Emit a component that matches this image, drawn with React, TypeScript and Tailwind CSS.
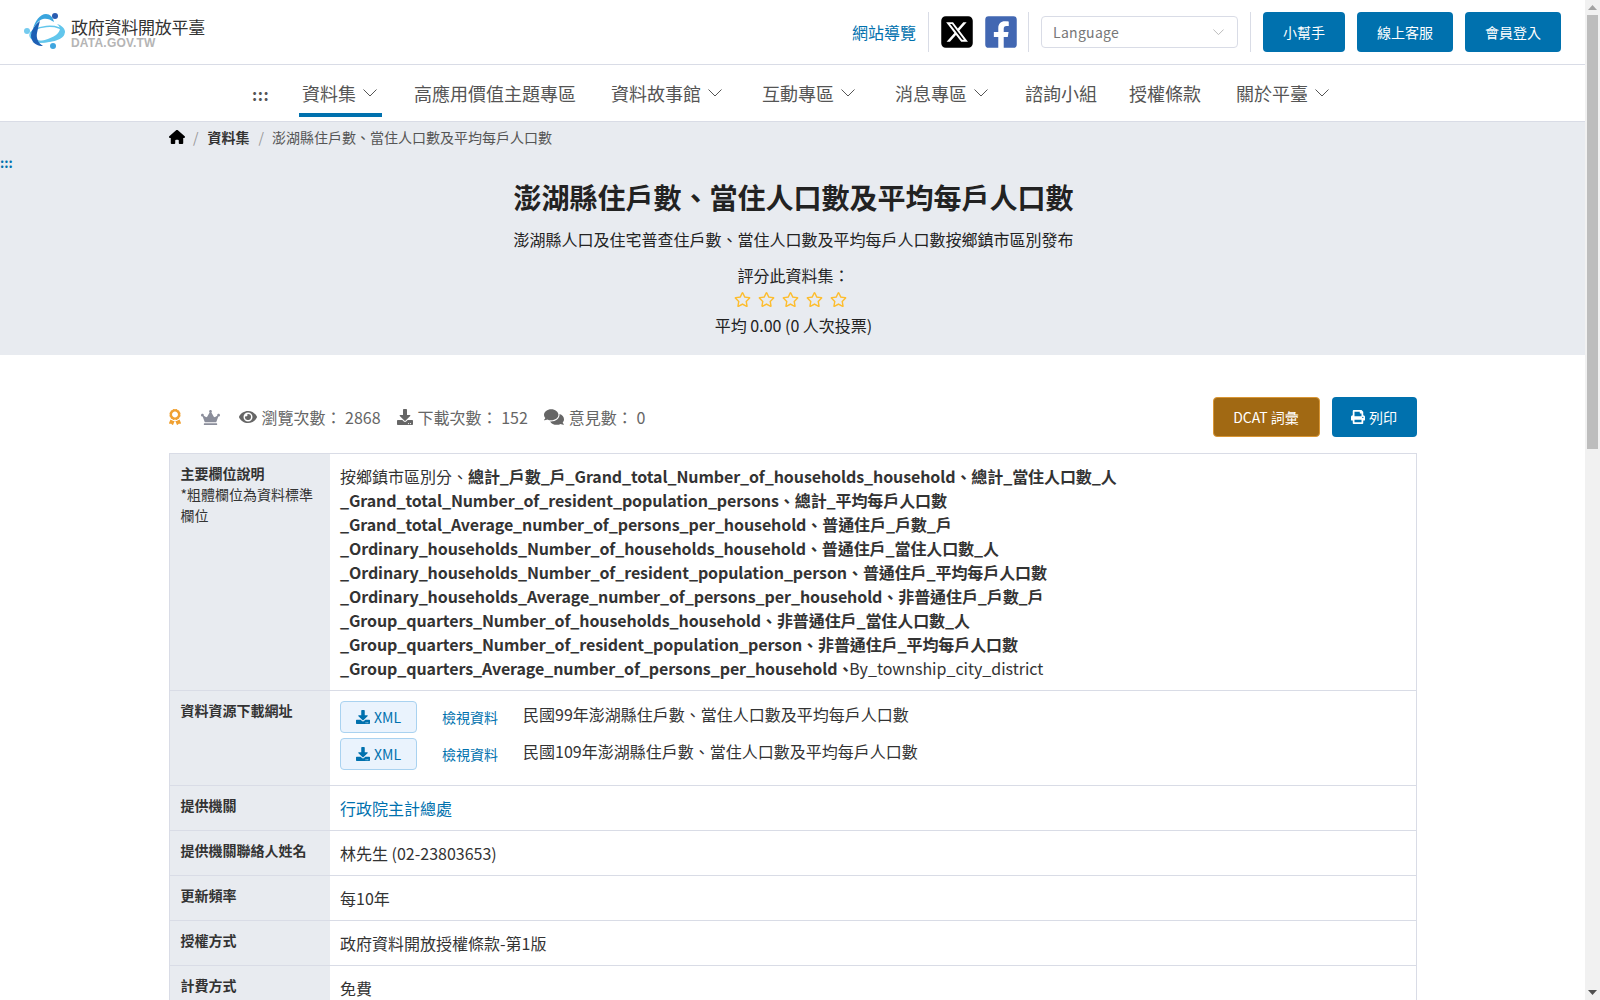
import { FaAward, FaComments, FaCrown, FaDownload, FaEye, FaFacebookSquare, FaPrint, FaRegStar } from "react-icons/fa";
import { FaHouse, FaSquareXTwitter } from "react-icons/fa6";

const navItems = [
  { label: "資料集", menu: true, active: true, gap: "" },
  { label: "高應用價值主題專區", gap: "ml-[29px]" },
  { label: "資料故事館", menu: true, gap: "ml-[29px]" },
  { label: "互動專區", menu: true, gap: "ml-[32px]" },
  { label: "消息專區", menu: true, gap: "ml-[32px]" },
  { label: "諮詢小組", gap: "ml-[29px]" },
  { label: "授權條款", gap: "ml-[26px]" },
  { label: "關於平臺", menu: true, gap: "ml-[29px]" },
];

const bold = [
  "總計_戶數_戶_Grand_total_Number_of_households_household",
  "總計_當住人口數_人_Grand_total_Number_of_resident_population_persons",
  "總計_平均每戶人口數_Grand_total_Average_number_of_persons_per_household",
  "普通住戶_戶數_戶_Ordinary_households_Number_of_households_household",
  "普通住戶_當住人口數_人_Ordinary_households_Number_of_resident_population_person",
  "普通住戶_平均每戶人口數_Ordinary_households_Average_number_of_persons_per_household",
  "非普通住戶_戶數_戶_Group_quarters_Number_of_households_household",
  "非普通住戶_當住人口數_人_Group_quarters_Number_of_resident_population_person",
  "非普通住戶_平均每戶人口數_Group_quarters_Average_number_of_persons_per_household",
];

const resources = ["民國99年澎湖縣住戶數、當住人口數及平均每戶人口數", "民國109年澎湖縣住戶數、當住人口數及平均每戶人口數"];

function Logo() {
  return (
    <svg width="42" height="40" viewBox="0 0 42 40" fill="none">
      <ellipse cx="23" cy="22" rx="17" ry="7.5" stroke="#62c6ec" strokeWidth="1.5" transform="rotate(-5 23 22)" />
      <path d="M8 30c12 3 30-2 33-10 0-4-4-7-8-8 4 3 4 7-1 11-6 4-16 7-24 7Z" fill="#62c6ec" />
      <path d="M16 9C9 14 5 22 8 28c2 4 6 6 11 6-5-3-7-8-6-13 1-5 2-9 3-12Z" fill="#1d5fb4" />
      <path d="M9 17C11 9 16 2 22 2c4 0 7 3 8 8-4-3-8-4-11-3-4 1-7 5-10 10Z" fill="#3aa5de" />
      <circle cx="31" cy="4" r="3" fill="#2a5cb0" />
      <circle cx="3" cy="19" r="3" fill="#74cbef" />
      <circle cx="29" cy="34" r="3" fill="#3fa5df" />
    </svg>
  );
}

function Chevron({ w = 14, color = "#555" }: { w?: number; color?: string }) {
  return (
    <svg width={w} height={w / 2 + 1} viewBox="0 0 14 8" fill="none" stroke={color} strokeWidth="1">
      <path d="M.5.5 7 7 13.5.5" />
    </svg>
  );
}

function Row({ label, note, children }: { label: string; note?: string; children: React.ReactNode }) {
  return (
    <tr className="border-b border-[#d9dce6]">
      <th className="w-[161px] bg-[#e8ebf0] pb-[11px] pl-[11px] pr-[10px] pt-[9px] text-left align-top text-[14px] font-normal leading-[21px] text-[#333]">
        <div className="font-bold">{label}</div>
        {note && <div>{note}</div>}
      </th>
      <td className="p-[10px] align-top text-[16px] leading-[24px] text-[#333]">{children}</td>
    </tr>
  );
}

export default function App() {
  return (
    <div className="min-h-[2235px] w-[1585px] bg-white font-['Noto_Sans_CJK_TC','Noto_Sans',sans-serif] text-[16px] text-[#333]">
      <header className="flex h-[65px] items-center border-b border-[#d9dce6] px-[24px]">
        <div className="flex items-center">
          <Logo />
          <div className="ml-[5px] flex flex-col">
            <span className="text-[17px] leading-[21px] tracking-[-0.25px] text-[#333]">政府資料開放平臺</span>
            <span className="font-['Liberation_Sans',sans-serif] text-[12px] font-bold leading-[12px] tracking-[0.2px] text-[#b5b5b5]">DATA.GOV.TW</span>
          </div>
        </div>
        <div className="ml-auto flex items-center">
          <a className="text-[16px] text-[#0071ae]">網站導覽</a>
          <div className="ml-[12px] h-[40px] border-l border-[#d9dce6]" />
          <FaSquareXTwitter className="ml-[10px] text-[36px] text-black" />
          <FaFacebookSquare className="ml-[8px] text-[36px] text-[#4267b2]" />
          <div className="ml-[9px] h-[40px] border-l border-[#d9dce6]" />
          <div className="ml-[12px] flex h-[32px] w-[197px] items-center justify-between rounded-[4px] border border-[#d9dce6] pl-[11px] pr-[13px] text-[14px] tracking-[0.3px] text-[#777]">
            Language
            <Chevron w={11} color="#aaa" />
          </div>
          <div className="ml-[12px] h-[40px] border-l border-[#d9dce6]" />
          <div className="ml-[12px] flex gap-[12px] text-[14px] text-white">
            <button className="h-[40px] w-[82px] rounded-[4px] bg-[#0071ae]">小幫手</button>
            <button className="h-[40px] w-[96px] rounded-[4px] bg-[#0071ae]">線上客服</button>
            <button className="h-[40px] w-[96px] rounded-[4px] bg-[#0071ae]">會員登入</button>
          </div>
        </div>
      </header>

      <nav className="flex h-[57px] items-stretch border-b border-[#d9dce6] pl-[252px] text-[18px] text-[#555]">
        <a className="mb-[4px] flex w-[47px] items-center pt-[6px] text-[16px] font-bold tracking-[0.5px]">:::</a>
        {navItems.map((item) => (
          <a
            key={item.label}
            className={`mb-[4px] flex items-center gap-[7px] border-b-4 pl-[3px] pt-[8px] ${item.menu ? "pr-[5px]" : "pr-[3px]"} ${item.gap} ${item.active ? "border-[#0071ae]" : "border-transparent"}`}
          >
            {item.label}
            {item.menu && <Chevron />}
          </a>
        ))}
      </nav>

      <section className="h-[233px] bg-[#e8ebf0]">
        <div className="flex h-[30px] items-center pl-[169px] text-[14px] text-[#555]">
          <FaHouse className="text-[16px] text-black" />
          <span className="ml-[8px] mr-[9px] text-[#999]">/</span>
          <span className="font-bold text-[#333]">資料集</span>
          <span className="ml-[9px] mr-[8px] text-[#999]">/</span>
          <span>澎湖縣住戶數、當住人口數及平均每戶人口數</span>
        </div>
        <div className="mt-[3px] h-[16px] text-[13px] font-bold leading-[16px] text-[#0071ae]">:::</div>
        <div className="flex flex-col items-center pl-[2px] text-[#222]">
          <h1 className="mt-[5px] text-[28px] font-bold leading-[42px] text-[#222]">澎湖縣住戶數、當住人口數及平均每戶人口數</h1>
          <p className="mt-[9px] leading-[24px]">澎湖縣人口及住宅普查住戶數、當住人口數及平均每戶人口數按鄉鎮市區別發布</p>
          <p className="mt-[12px] leading-[24px]">評分此資料集：</p>
          <div className="mr-[6px] mt-[4px] flex gap-[7px] text-[17px] text-[#fdbd2e]">
            {[1, 2, 3, 4, 5].map((n) => (
              <FaRegStar key={n} />
            ))}
          </div>
          <p className="mt-[5px] leading-[24px]">平均 0.00 (0 人次投票)</p>
        </div>
      </section>

      <main className="mx-auto w-[1248px]">
        <div className="mt-[42px] flex h-[40px] items-center text-[#666]">
          <FaAward className="ml-[-2px] text-[16px] text-[#f0a030]" />
          <FaCrown className="ml-[18px] text-[19px] text-[#8a8d9a]" />
          <FaEye className="ml-[19px] text-[18px]" />
          <span className="ml-[5px]">瀏覽次數： 2868</span>
          <FaDownload className="ml-[16px] text-[16px]" />
          <span className="ml-[5px]">下載次數： 152</span>
          <FaComments className="ml-[16px] text-[20px]" />
          <span className="ml-[5px]">意見數： 0</span>
          <div className="ml-auto flex gap-[12px] text-[14px] text-white">
            <button className="h-[40px] w-[107px] rounded-[4px] border border-[#d99634] bg-[#a16913]">DCAT 詞彙</button>
            <button className="flex h-[40px] w-[85px] items-center justify-center gap-[4px] rounded-[4px] bg-[#0071ae]">
              <FaPrint /> 列印
            </button>
          </div>
        </div>

        <table className="mt-[16px] w-full border-collapse border border-[#d9dce6]">
          <tbody>
            <Row label="主要欄位說明" note="*粗體欄位為資料標準欄位">
              按鄉鎮市區別分、
              {bold.map((b, i) => (
                <b key={b} className="font-semibold tracking-[-0.09px]">
                  {b}
                  {i < bold.length - 1 ? "、" : <span className="mr-[-4px]">、</span>}
                </b>
              ))}
              By_township_city_district
            </Row>
            <Row label="資料資源下載網址">
              <div className="flex flex-col gap-[5px] pb-[5px]">
                {resources.map((r) => (
                  <div key={r} className="flex items-start">
                    <a className="flex h-[32px] w-[77px] items-center justify-center gap-[4px] rounded-[4px] border border-[#a9d2f0] bg-[#eaf3fd] text-[14px] text-[#0071ae]">
                      <FaDownload className="text-[14px]" /> XML
                    </a>
                    <a className="ml-[25px] mt-[4px] text-[14px] text-[#0071ae]">檢視資料</a>
                    <span className="ml-[25px] mt-[1px]">{r}</span>
                  </div>
                ))}
              </div>
            </Row>
            <Row label="提供機關">
              <a className="text-[#0071ae]">行政院主計總處</a>
            </Row>
            <Row label="提供機關聯絡人姓名">林先生 (02-23803653)</Row>
            <Row label="更新頻率">每10年</Row>
            <Row label="授權方式">政府資料開放授權條款-第1版</Row>
            <Row label="計費方式">免費</Row>
          </tbody>
        </table>
      </main>

      {/* browser scrollbar, the page itself is photographed without one */}
      <div className="fixed right-0 top-0 flex h-[1000px] w-[15px] flex-col items-center justify-between bg-[#f1f1f1]">
        <div className="flex w-full flex-col items-center">
          <svg width="9" height="15" viewBox="0 0 9 15" fill="#a3a3a3">
            <path d="M4.5 5 9 10H0Z" />
          </svg>
          <div className="h-[434px] w-[11px] bg-[#bdbdbd]" />
        </div>
        <svg width="9" height="15" viewBox="0 0 9 15" fill="#505050">
          <path d="M4.5 10 9 5H0Z" />
        </svg>
      </div>
    </div>
  );
}
